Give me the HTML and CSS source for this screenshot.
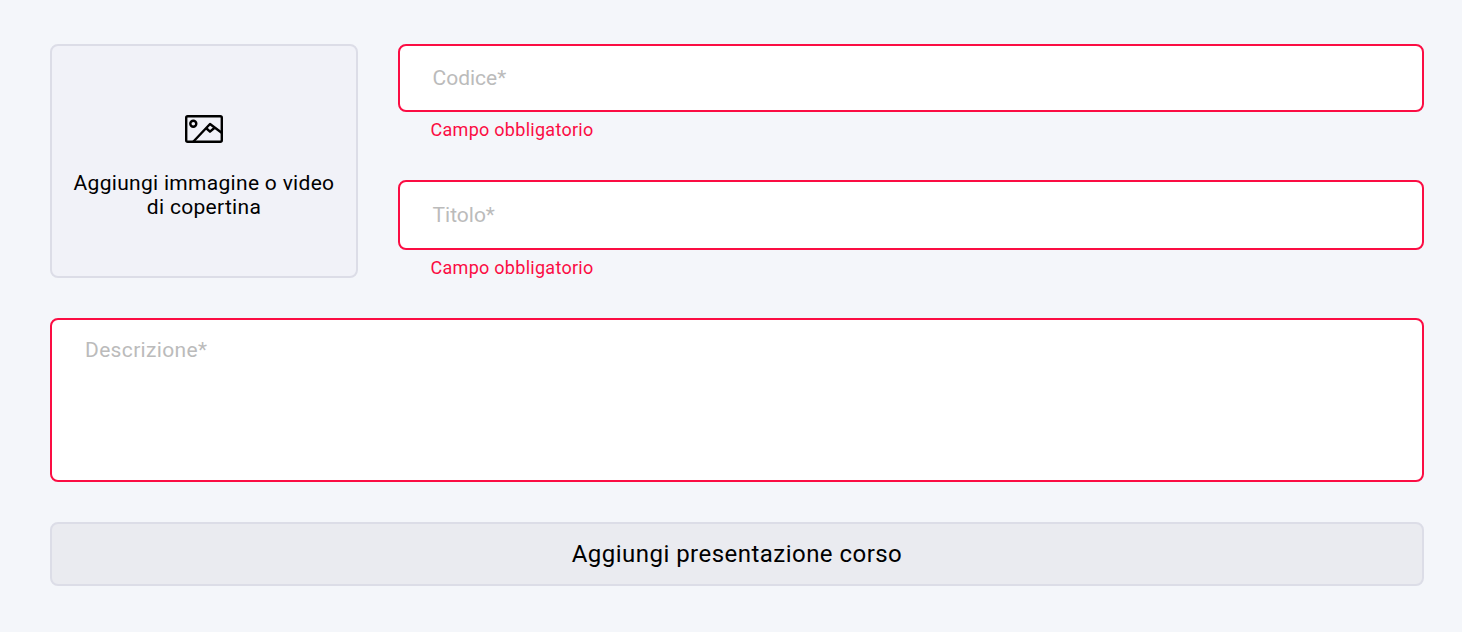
FILE: index.html
```html
<!DOCTYPE html>
<html lang="en">
<head>
    <meta charset="UTF-8">
    <title>Aggiungi presentazione corso</title>
    <link rel="stylesheet" href="styles.css">
</head>
<body>
    <form class="form">
        <div class="top-row">
            <div class="cover">
                <svg class="cover-icon" width="38" height="28" viewBox="0 0 38 28" fill="none" stroke="#000" stroke-width="2.4" stroke-linejoin="round">
                    <rect x="1.2" y="1.2" width="35.6" height="25.6" rx="1.5"/>
                    <circle cx="8.3" cy="8.7" r="3"/>
                    <path d="M8 27L25 9L37 18"/>
                    <path d="M21 13L25 16.7L29.3 13"/>
                </svg>
                <div class="cover-text">Aggiungi immagine o video<br>di copertina</div>
            </div>
            <div class="fields">
                <div class="field field-code">
                    <div class="input">Codice*</div>
                    <div class="error">Campo obbligatorio</div>
                </div>
                <div class="field field-title">
                    <div class="input input-tall">Titolo*</div>
                    <div class="error">Campo obbligatorio</div>
                </div>
            </div>
        </div>
        <div class="textarea">Descrizione*</div>
        <div class="submit">Aggiungi presentazione corso</div>
    </form>
</body>
</html>
```

FILE: styles.css
```css
* {
    box-sizing: border-box;
}
body {
    margin: 0;
    background-color: #f4f6fa;
    font-family: "Roboto", sans-serif;
    color: #000;
}
.form {
    padding: 44px 38px 0 50px;
}
.top-row {
    display: flex;
    gap: 40px;
}
.cover {
    width: 308px;
    height: 234px;
    flex-shrink: 0;
    display: flex;
    flex-direction: column;
    align-items: center;
    padding-top: 69px;
    background-color: #f1f2f8;
    border: 2px solid #dcdde7;
    border-radius: 8px;
}
.cover-icon {
    display: block;
}
.cover-text {
    margin-top: 28px;
    font-size: 21px;
    line-height: 24px;
    letter-spacing: 0.3px;
    text-align: center;
}
.fields {
    flex: 1;
}
.field-title {
    margin-top: 38px;
}
.input {
    height: 68px;
    padding: 0 32.5px;
    display: flex;
    align-items: center;
    background-color: #fff;
    border: 2px solid #fb0d43;
    border-radius: 8px;
    font-size: 21px;
    color: #bbb;
}
.input-tall {
    height: 70px;
}
.error {
    margin-top: 6px;
    padding-left: 32.5px;
    font-size: 18px;
    line-height: 24px;
    letter-spacing: 0.28px;
    color: #fb0d43;
}
.textarea {
    height: 164px;
    margin-top: 38px;
    padding: 18px 33px;
    background-color: #fff;
    border: 2px solid #fb0d43;
    border-radius: 8px;
    font-size: 21px;
    line-height: 24px;
    letter-spacing: 0.35px;
    color: #bbb;
}
.submit {
    height: 64px;
    margin-top: 40px;
    display: flex;
    align-items: center;
    justify-content: center;
    background-color: #eaebf0;
    border: 2px solid #dcdde7;
    border-radius: 8px;
    font-size: 24px;
    letter-spacing: 0.47px;
}
```
